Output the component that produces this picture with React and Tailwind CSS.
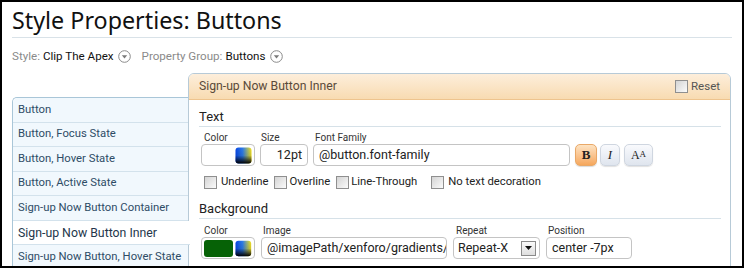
import React from "react";

const F = { fontFamily: 'Roboto, "Noto Sans", sans-serif' };
const T = { fontFamily: '"Noto Sans", "Open Sans", sans-serif' };

function Dd() {
  return (
    <svg width="13" height="13" viewBox="0 0 13 13" className="inline-block ml-[4px] align-[-2px]">
      <circle cx="6.5" cy="6.5" r="5.8" fill="#fff" stroke="#8a8a8a" strokeWidth="1" />
      <path d="M3.8 5.2 L9.2 5.2 L6.5 8.4 Z" fill="#7a7a7a" />
    </svg>
  );
}

function Picker({ id }) {
  return (
    <svg width="17" height="17" viewBox="0 0 17 17">
      <defs>
        <linearGradient id={`ph${id}`} x1="0" y1="0" x2="1" y2="0">
          <stop offset="0" stopColor="#0848e8" />
          <stop offset="0.45" stopColor="#2f7de8" />
          <stop offset="1" stopColor="#f7e41c" />
        </linearGradient>
        <linearGradient id={`pv${id}`} x1="0" y1="0" x2="0" y2="1">
          <stop offset="0" stopColor="#000" stopOpacity="0" />
          <stop offset="0.5" stopColor="#000" stopOpacity="0.1" />
          <stop offset="1" stopColor="#000" stopOpacity="1" />
        </linearGradient>
      </defs>
      <rect x="0.5" y="0.5" width="16" height="16" rx="3" fill={`url(#ph${id})`} />
      <rect x="0.5" y="0.5" width="16" height="16" rx="3" fill={`url(#pv${id})`} />
    </svg>
  );
}

function Cb() {
  return (
    <span className="inline-block w-[13px] h-[13px] border border-[#8f8f8f] bg-gradient-to-br from-[#d4d4d4] to-[#fbfbfb] shrink-0" />
  );
}

function Input({ w, children, right }) {
  return (
    <div
      className={`${w} h-[22px] border border-[#c4c4c4] rounded-[4px] bg-white flex items-center px-[5px] text-[12.5px] text-[#222] shrink-0 overflow-hidden whitespace-nowrap ${right ? "justify-end" : ""}`}
    >
      {children}
    </div>
  );
}

const sidebar = [
  "Button",
  "Button, Focus State",
  "Button, Hover State",
  "Button, Active State",
  "Sign-up Now Button Container",
  "Sign-up Now Button Inner",
  "Sign-up Now Button, Hover State",
];

export default function App() {
  return (
    <div className="w-[744px] h-[268px] border-2 border-black bg-white overflow-hidden px-[10px]" style={F}>
      <div className="border-b border-[#d9e2e8] h-[36px] flex items-end">
        <h1 className="text-[23.3px] leading-[30px] text-[#111] mb-[2px]" style={T}>Style Properties: Buttons</h1>
      </div>
      <div className="mt-[11px] h-[14px] flex items-center text-[11.6px] leading-[14px]">
        <span className="text-[#8a8a8a]">Style:</span>
        <span className="text-[#111] ml-[3px]">Clip The Apex</span>
        <Dd />
        <span className="text-[#8a8a8a] ml-[11px]">Property Group:</span>
        <span className="text-[#111] ml-[3px]">Buttons</span>
        <Dd />
      </div>
      <div className="mt-[10px] flex">
        <div className="w-[176px] mt-[24px] shrink-0">
          <div className="border-t border-l border-[#a9c6d8] rounded-tl-[5px] overflow-visible">
            {sidebar.map((s, i) => {
              const sel = i === 5;
              return (
                <div
                  key={s}
                  className={
                    sel
                      ? "relative z-10 w-[177px] h-[24.5px] bg-white border-b border-[#d3e2ec] flex items-center pl-[5px] pt-[1px] text-[12.3px] text-[#24364a] whitespace-nowrap"
                      : `h-[24.5px] bg-[#f1f8fd] border-b border-[#d3e2ec] flex items-center pl-[5px] pt-[1px] text-[11.3px] text-[#2e4c66] whitespace-nowrap ${i === 0 ? "rounded-tl-[5px]" : ""}`
                  }
                >
                  {s}
                </div>
              );
            })}
          </div>
        </div>
        <div className="flex-1 mr-[1px] border border-[#b7cad7] rounded-t-[6px] h-[220px]">
          <div className="h-[26px] rounded-t-[5px] bg-gradient-to-b from-[#fdeedb] to-[#f8dbb1] border-b border-[#eec48e] flex items-center justify-between pl-[10px] pr-[10px]">
            <span className="text-[12.2px] text-[#5a4a3a]">Sign-up Now Button Inner</span>
            <span className="flex items-center gap-[3px] text-[11.5px] text-[#555]">
              <Cb />
              Reset
            </span>
          </div>
          <div className="pl-[10px] pr-[9px]">
            <div className="pt-[8px] pb-[1px] border-b border-[#d6e1e8] text-[13px] leading-[17px] text-[#222]">Text</div>
            <div className="mt-[4px] flex items-end pl-[2px]">
              <div className="flex flex-col">
                <span className="text-[10px] leading-[13px] text-[#333] pl-[3px]">Color</span>
                <div className="w-[54px] h-[22px] border border-[#c4c4c4] rounded-[4px] bg-white flex items-center justify-end pr-[2px]">
                  <Picker id="a" />
                </div>
              </div>
              <div className="flex flex-col ml-[5px]">
                <span className="text-[10px] leading-[13px] text-[#333] pl-[1px]">Size</span>
                <Input w="w-[48px]" right>12pt</Input>
              </div>
              <div className="flex flex-col ml-[5px]">
                <span className="text-[10px] leading-[13px] text-[#333] pl-[2px]">Font Family</span>
                <Input w="w-[257px]">@button.font-family</Input>
              </div>
              <div className="ml-[5px] w-[22px] h-[22px] rounded-[5px] border border-[#e9a867] bg-gradient-to-b from-[#fde3c2] to-[#f5a75c] shadow-[0_1px_1px_rgba(0,0,0,0.15)] flex items-center justify-center text-[13px] font-bold text-[#222]" style={{ fontFamily: '"Liberation Serif", serif' }}>
                B
              </div>
              <div className="ml-[3px] w-[20px] h-[22px] rounded-[5px] border border-[#cfd6e0] bg-gradient-to-b from-[#f9fafd] to-[#dfe5ee] shadow-[0_1px_1px_rgba(0,0,0,0.12)] flex items-center justify-center text-[13px] italic text-[#222]" style={{ fontFamily: '"Liberation Serif", serif' }}>
                I
              </div>
              <div className="ml-[4px] w-[29px] h-[22px] rounded-[5px] border border-[#cfd6e0] bg-gradient-to-b from-[#f9fafd] to-[#dfe5ee] shadow-[0_1px_1px_rgba(0,0,0,0.12)] flex items-center justify-center text-[#222]" style={{ fontFamily: '"Liberation Serif", serif' }}>
                <span className="text-[12px]">A</span>
                <span className="text-[9px]">A</span>
              </div>
            </div>
            <div className="mt-[9px] flex items-center text-[11.3px] leading-[14px] text-[#222] pl-[5px]">
              <Cb />
              <span className="ml-[4px]">Underline</span>
              <span className="ml-[6px] flex"><Cb /></span>
              <span className="ml-[2px]">Overline</span>
              <span className="ml-[6px] flex"><Cb /></span>
              <span className="ml-[2px]">Line-Through</span>
              <span className="ml-[14px] flex"><Cb /></span>
              <span className="ml-[4px]">No text decoration</span>
            </div>
            <div className="pt-[11px] pb-[1px] border-b border-[#d6e1e8] text-[13px] leading-[17px] text-[#222]">Background</div>
            <div className="mt-[5px] flex items-end pl-[2px]">
              <div className="flex flex-col">
                <span className="text-[10px] leading-[13px] text-[#333] pl-[3px]">Color</span>
                <div className="w-[54px] h-[22px] border border-[#c4c4c4] rounded-[4px] bg-white flex items-center pl-[2px] pr-[2px] gap-[2px]">
                  <span className="w-[30px] h-[17px] rounded-[3px] bg-[#066206]" />
                  <Picker id="b" />
                </div>
              </div>
              <div className="flex flex-col ml-[6px]">
                <span className="text-[10px] leading-[13px] text-[#333] pl-[2px]">Image</span>
                <Input w="w-[186px]">@imagePath/xenforo/gradients/</Input>
              </div>
              <div className="flex flex-col ml-[6px]">
                <span className="text-[10px] leading-[13px] text-[#333] pl-[3px]">Repeat</span>
                <div className="w-[87px] h-[22px] border border-[#c4c4c4] rounded-[4px] bg-white flex items-center justify-between pl-[4px] pr-[3px] text-[12.5px] text-[#222]">
                  <span>Repeat-X</span>
                  <span className="w-[15px] h-[15px] border border-[#8a8a8a] bg-gradient-to-b from-[#fafafa] to-[#dedede] flex items-center justify-center">
                    <svg width="7" height="4" viewBox="0 0 7 4"><path d="M0 0 L7 0 L3.5 4 Z" fill="#111" /></svg>
                  </span>
                </div>
              </div>
              <div className="flex flex-col ml-[6px]">
                <span className="text-[10px] leading-[13px] text-[#333] pl-[2px]">Position</span>
                <Input w="w-[86px]">center -7px</Input>
              </div>
            </div>
          </div>
        </div>
      </div>
    </div>
  );
}
